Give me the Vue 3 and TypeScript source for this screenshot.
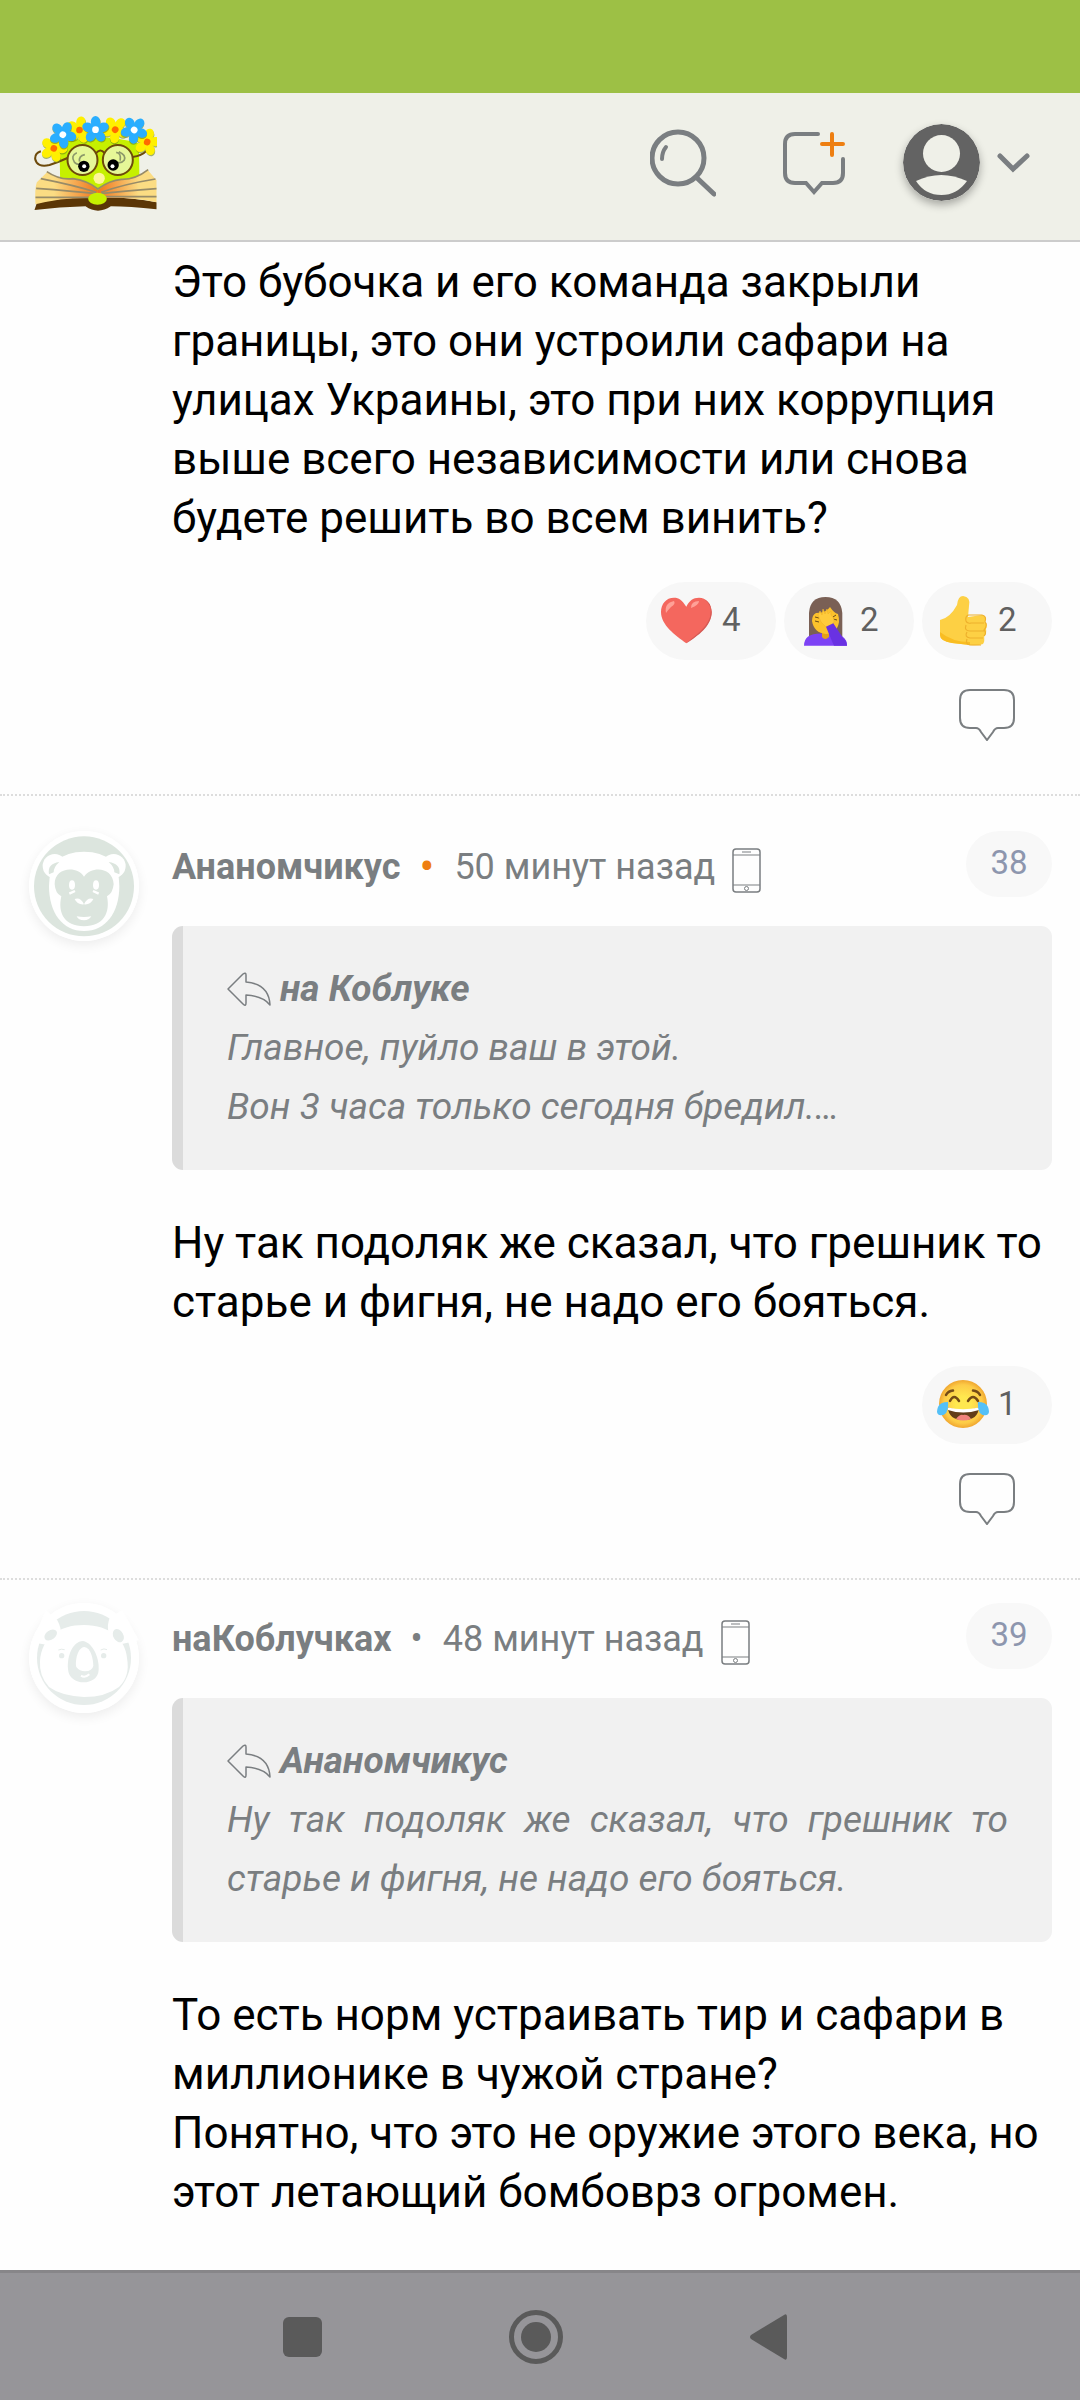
<script setup lang="ts">
interface Reaction {
  kind: 'heart' | 'facepalm' | 'thumb' | 'joy'
  label: string
  count: number
}

interface Comment {
  id: number
  author?: string
  avatar?: 'monkey' | 'koala'
  time?: string
  fresh?: boolean
  quote?: { author: string; lines: string[] }
  text: string[]
  reactions: Reaction[]
}

interface Flower {
  x: number
  y: number
  turn: number
  petal: string
  heart: string
}

const petalAngles = [0, 72, 144, 216, 288]

const wreath: Flower[] = [
  { x: 163, y: 200, turn: 20, petal: '#fff000', heart: '#ff6b00' },
  { x: 240, y: 145, turn: 10, petal: '#fff000', heart: '#ff6b00' },
  { x: 347, y: 144, turn: 40, petal: '#fff000', heart: '#ff6b00' },
  { x: 443, y: 181, turn: 15, petal: '#fff000', heart: '#ff6b00' },
  { x: 190, y: 159, turn: 30, petal: '#2aaeff', heart: '#fff' },
  { x: 288, y: 144, turn: 0, petal: '#2aaeff', heart: '#fff' },
  { x: 404, y: 145, turn: 40, petal: '#2aaeff', heart: '#fff' },
]

const comments: Comment[] = [
  {
    id: 37,
    text: [
      'Это бубочка и его команда закрыли границы, это они устроили сафари на улицах Украины, это при них коррупция выше всего независимости или снова будете решить во всем винить?',
    ],
    reactions: [
      { kind: 'heart', label: 'Сердце', count: 4 },
      { kind: 'facepalm', label: 'Рука на лице', count: 2 },
      { kind: 'thumb', label: 'Нравится', count: 2 },
    ],
  },
  {
    id: 38,
    author: 'Ананомчикус',
    avatar: 'monkey',
    time: '50 минут назад',
    fresh: true,
    quote: {
      author: 'на Коблуке',
      lines: ['Главное, пуйло ваш в этой.', 'Вон 3 часа только сегодня бредил.…'],
    },
    text: ['Ну так подоляк же сказал, что грешник то старье и фигня, не надо его бояться.'],
    reactions: [{ kind: 'joy', label: 'Смех до слёз', count: 1 }],
  },
  {
    id: 39,
    author: 'наКоблучках',
    avatar: 'koala',
    time: '48 минут назад',
    quote: {
      author: 'Ананомчикус',
      lines: ['Ну так подоляк же сказал, что грешник то старье и фигня, не надо его бояться.'],
    },
    text: [
      'То есть норм устраивать тир и сафари в миллионике в чужой стране?',
      'Понятно, что это не оружие этого века, но этот летающий бомбоврз огромен.',
    ],
    reactions: [],
  },
]
</script>

<template>
  <div class="page">
    <div class="status-bar"></div>

    <header class="top-bar">
      <a class="logo" href="#" aria-label="На главную">
        <svg viewBox="104 100 368 288" width="123" height="96">
          <defs>
            <linearGradient id="leafL" x1="0" x2="1"><stop offset="0.3" stop-color="#fbdc83" /><stop offset="1" stop-color="#f0741c" /></linearGradient>
            <linearGradient id="leafR" x1="1" x2="0"><stop offset="0.3" stop-color="#fbdc83" /><stop offset="1" stop-color="#f0741c" /></linearGradient>
          </defs>
          <path d="M180 185Q300 150 418 185L420 300L300 340L182 300Z" fill="#c6f000" />
          <path d="M105 385L112 364Q200 345 295 348Q390 345 471 362V383Q390 374 334 374Q295 400 258 374Q180 376 105 385Z" fill="#5b3606" />
          <path d="M144 270Q180 298 220 292Q262 296 295 326V350Q200 344 108 368Q105 320 112 302Z" fill="url(#leafL)" />
          <path d="M444 264Q408 296 366 294Q326 298 295 326V350Q390 344 471 362V296Z" fill="url(#leafR)" />
          <path d="M142 270Q180 296 220 291Q262 296 295 322Q330 296 366 293Q408 294 446 264M124 291Q230 312 290 332M110 320Q220 328 290 336M108 347H275M468 292Q370 308 305 332M471 321Q370 328 305 336M471 345H318" fill="none" stroke="#978b68" stroke-width="5" />
          <ellipse cx="294" cy="351" rx="28" ry="18" fill="#c6f000" />
          <circle cx="299" cy="290" r="17" fill="#fff59a" />
          <g fill="#e6f797" stroke="#6d4a0b" stroke-width="6">
            <circle cx="249" cy="235" r="45" /><circle cx="355" cy="235" r="45" />
          </g>
          <path d="M289 215Q302 198 315 214M204 229Q180 240 150 250Q112 258 107 232Q106 214 124 209M399 226Q428 222 442 206" fill="none" stroke="#6d4a0b" stroke-width="6" />
          <path d="M232 213Q212 222 225 242Q235 252 246 246M256 219Q237 223 240 240M350 212Q366 214 362 237M358 210Q381 220 374 236Q366 246 353 242" fill="none" stroke="#8c986a" stroke-width="5" />
          <circle cx="253" cy="254" r="17" /><circle cx="341" cy="250" r="17" />
          <circle cx="254" cy="254" r="6" fill="#fff" /><circle cx="339" cy="254" r="6" fill="#fff" />
          <g v-for="(f, i) in wreath" :key="i" :transform="`translate(${f.x} ${f.y}) rotate(${f.turn})`">
            <g fill="#6f8a1c" opacity="0.6" transform="translate(2 3)">
              <ellipse v-for="a in petalAngles" :key="a" cx="0" cy="-24" rx="14" ry="17" :transform="`rotate(${a})`" />
            </g>
            <g :fill="f.petal">
              <ellipse v-for="a in petalAngles" :key="a" cx="0" cy="-24" rx="14" ry="17" :transform="`rotate(${a})`" />
              <circle r="16" />
            </g>
            <circle r="10" :fill="f.heart" />
          </g>
        </svg>
      </a>

      <nav class="tools">
        <button class="tool" type="button" aria-label="Поиск">
          <svg viewBox="0 0 66 80" width="66" height="80" fill="none" stroke="#7a7e81" stroke-linecap="round">
            <circle cx="28" cy="35" r="26" stroke-width="5" />
            <path d="M46 54L64 71" stroke-width="5" /><path d="M12 36Q12 29 16 24" stroke-width="4" />
          </svg>
        </button>
        <button class="tool" type="button" aria-label="Новая тема">
          <svg viewBox="0 0 62 80" width="62" height="80" fill="none" stroke-width="4" stroke-linecap="round">
            <path d="M35 11H12Q2 11 2 21V50Q2 60 12 60H23L31 69L39 60H50Q60 60 60 50V36" stroke="#7a7e81" />
            <path d="M49 11V32M39 21H60" stroke="#ee7f11" />
          </svg>
        </button>
        <button class="tool account" type="button" aria-label="Профиль">
          <svg class="person" viewBox="0 0 77 77" width="77" height="77">
            <circle cx="38.500" cy="38.500" r="38.500" fill="#636363" />
            <circle cx="38.500" cy="29.500" r="18.500" fill="#eff0e8" />
            <path d="M13 57Q38 45 64 57Q54 71 38.500 71Q22 71 13 57Z" fill="#eff0e8" />
          </svg>
          <svg viewBox="0 0 33 20" width="33" height="20" fill="none" stroke="#7a7e81" stroke-width="5" stroke-linecap="round">
            <path d="M3 3L16 16L30 3" />
          </svg>
        </button>
      </nav>
    </header>

    <main class="feed">
      <article v-for="c in comments" :key="c.id" class="comment" :class="{ headed: c.author, fresh: c.fresh }">
        <div class="side">
          <div v-if="c.avatar" class="avatar">
            <svg v-if="c.avatar === 'monkey'" viewBox="0 0 330 330" width="110" height="110">
              <circle cx="165" cy="165" r="165" fill="#fff" />
              <circle cx="165" cy="166" r="150" fill="#dce5de" />
              <g fill="#fff"><circle cx="77" cy="105" r="36" /><circle cx="254" cy="105" r="36" /><path d="M60 165Q60 62 165 62Q271 62 271 165C271 245 230 300 165 300C100 300 60 245 60 165Z" /></g>
              <path d="M60 130Q54 98 91 93Q74 108 74 124ZM271 130Q276 98 239 93Q256 108 256 124Z" fill="#dce5de" />
              <path d="M165 137C145 104 76 108 77 160Q79 188 97 196C86 245 105 285 165 286C225 285 244 245 234 196Q251 188 254 160C252 108 188 104 165 137Z" fill="#dce5de" />
              <g fill="#fff"><ellipse cx="129" cy="162" rx="9" ry="14" /><ellipse cx="201" cy="162" rx="9" ry="14" /></g>
              <path d="M121 188L138 180M209 188L192 180" stroke="#fff" stroke-width="7" />
              <path d="M137 204Q155 198 165 220Q145 222 137 204ZM193 204Q175 198 165 220Q185 222 193 204ZM143 256Q165 260 187 256Q180 268 165 268Q148 268 143 256Z" fill="#fff" />
            </svg>
            <svg v-else viewBox="0 0 330 330" width="110" height="110">
              <circle cx="165" cy="165" r="165" fill="#fff" />
              <circle cx="165" cy="165" r="141" fill="#e6ecea" />
              <path d="M50 20L85 52Q98 76 95 95Q75 105 56 126L10 118ZM280 20L242 45Q234 65 238 87Q258 105 275 124L330 112Z" fill="#fff" />
              <path d="M33 175C38 105 88 66 165 66C242 66 290 110 294 165Q304 220 270 252Q230 282 165 282Q95 278 60 252Q30 220 33 175Z" fill="#fff" />
              <g fill="#e6ecea"><ellipse cx="65" cy="96" rx="21" ry="14" transform="rotate(-35 65 96)" /><ellipse cx="268" cy="98" rx="21" ry="15" transform="rotate(60 268 98)" />
                <circle cx="98" cy="158" r="8" /><circle cx="224" cy="158" r="8" />
                <path d="M162 114C195 120 212 172 209 200C208 250 120 252 117 198C114 160 130 116 162 114Z" />
              </g>
              <path d="M166 132C142 134 138 185 142 192Q152 205 168 205Q190 204 193 188C192 168 186 134 166 132Z" fill="#fff" />
              <path d="M156 218Q168 226 181 214" fill="none" stroke="#fff" stroke-width="6" />
              <path d="M88 141Q97 137 107 140M215 141Q225 135 234 140" fill="none" stroke="#e6ecea" stroke-width="3" />
            </svg>
          </div>
        </div>

        <div class="body">
          <div v-if="c.author" class="meta">
            <div class="byline">
              <a class="author" href="#">{{ c.author }}</a>
              <span class="dot">•</span>
              <time>{{ c.time }}</time>
              <svg class="phone" viewBox="0 0 29 45" width="29" height="45" fill="none" stroke="#7a7e81">
                <rect x="1" y="1" width="27" height="43" rx="3" stroke-width="1.500" />
                <path d="M1 7H28M1 37H28" stroke-width="1" /><path d="M10 4H19" stroke-width="2" opacity="0.500" /><circle cx="14.500" cy="40.500" r="2" />
              </svg>
            </div>
            <a class="number" href="#">{{ c.id }}</a>
          </div>

          <blockquote v-if="c.quote" class="quote">
            <div class="quote-author">
              <svg viewBox="0 0 44 34" width="44" height="34" fill="none" stroke="#7a7e81" stroke-width="1.500" stroke-linejoin="round">
                <path d="M1 17L16 2Q19 0 19 3V10Q42 12 43 33Q36 24 19 23V31Q19 35 16 32Z" />
              </svg>
              <strong>{{ c.quote.author }}</strong>
            </div>
            <p v-for="line in c.quote.lines" :key="line">{{ line }}</p>
          </blockquote>

          <div class="text">
            <p v-for="line in c.text" :key="line">{{ line }}</p>
          </div>

          <template v-if="c.reactions.length">
            <div class="reactions">
              <button v-for="r in c.reactions" :key="r.kind" class="reaction" type="button" :aria-label="r.label">
                <svg v-if="r.kind === 'heart'" viewBox="0 0 54 52" width="54" height="52">
                  <path d="M26.300 11.700C22 5 19 2.700 14 2.700C6 2.700 1 9 1 17C1 30 15 40 26.300 48.300C38 40 51.700 30 51.700 17C51.700 9 46 2.700 39 2.700C33 2.700 29 6 26.300 11.700Z" fill="#f4675e" />
                  <path d="M44 4Q53 10 50 22C46 34 34 41 26.300 48.300C38 41 51.700 31 51.700 17Q51 7 44 4Z" fill="#d45a55" />
                  <path d="M6 18Q4 8 14 6Q16 9 11 12Q8 15 6 18ZM31 13Q31 6 39 6Q39 10 31 13Z" fill="#ffa197" />
                </svg>
                <svg v-else-if="r.kind === 'facepalm'" viewBox="0 0 54 52" width="54" height="52">
                  <path d="M11 42V18Q12 2 27.500 2Q43 2 44.300 18V42Z" fill="#7a6055" />
                  <path d="M6 50.700Q6 38 24 38.500L32 38Q49 39 49 50.700Z" fill="#7d42f5" />
                  <path d="M24 36H31V42Q27 46 24 42Z" fill="#e5a017" />
                  <path d="M14 26Q14 20 18 18Q28 18 32 12Q36 18 40 19Q41 22 41 27Q39 39 28 39Q16 38 14 26Z" fill="#fcc22c" />
                  <path d="M17 22L21 23M17 26L21 27M38 20L35 22M39 25L35 24" stroke="#6a4b18" />
                  <path d="M22 16L24 20L25 14L27 19L29 14L30 19L33 16L33 20Q38 25 35 29L28 32Q22 28 20 20Z" fill="#ffcb3c" stroke="#f0b42a" stroke-width="0.600" />
                  <path d="M28 31.700L35.300 28.300L45 43Q49 46 49 50.700H36Q33 44 28 31.700Z" fill="#6932e2" />
                </svg>
                <svg v-else-if="r.kind === 'thumb'" viewBox="0 0 54 52" width="54" height="52">
                  <path d="M4 25Q14 23 21 10Q22 1 27 1Q35 2 33 11L32 22L46 20Q51 21 49 27Q52 30 50 34Q51 38 48 41Q49 46 47 49Q42 51 34 50L16 48Q4 46 4 40Z" fill="#fdd044" />
                  <path d="M4 37Q16 47 34 47V50L16 48Q4 46 4 40Z" fill="#f9bd22" />
                  <path d="M32 20Q29 22 30 26Q31 29 35 28H48M30 30Q28 36 34 36H48M31 37Q28 42 34 43H47M31 44Q29 49 34 50H45M49 27Q52 30 48 35Q51 38 48 41M46 20Q51 21 49 27M32 20H46" fill="none" stroke="#eeb02c" stroke-width="1.200" />
                </svg>
                <svg v-else viewBox="0 0 54 52" width="54" height="52">
                  <defs><radialGradient id="joyFace"><stop offset="0.300" stop-color="#ffe84f" /><stop offset="0.800" stop-color="#fdcb47" /><stop offset="1" stop-color="#f0a730" /></radialGradient></defs>
                  <circle cx="27" cy="25" r="24" fill="url(#joyFace)" />
                  <path d="M10 16Q12 12 17 11.500M44 16Q42 12 37 11.500M14 22Q18 14 23 22M32 22Q37 14 42 22" fill="none" stroke="#744b16" stroke-width="2.500" stroke-linecap="round" />
                  <path d="M11.700 28.500Q27 34 43 28.500Q42 41 27.300 41Q13 41 11.700 28.500Z" fill="#623e19" />
                  <path d="M11.700 28.500Q27 32 43 28.500V31Q27 36 12 31Z" fill="#fff" />
                  <path d="M20 40Q24 35 27 36Q32 35 35 40Q27 43 20 40Z" fill="#f0837c" />
                  <path d="M12 23Q13 36 5 36.300Q-1 36 2 28Q4 23 12 23ZM42 23Q41 36 49 36.300Q55 36 52 28Q50 23 42 23Z" fill="#54c0f7" />
                </svg>
                <span class="count">{{ r.count }}</span>
              </button>
            </div>
            <div class="actions">
              <button class="reply" type="button" aria-label="Ответить">
                <svg viewBox="0 0 56 52" width="56" height="52" fill="none" stroke="#7a7e81" stroke-width="2">
                  <path d="M11 1H45Q55 1 55 11V29Q55 39 45 39H39Q36 39 34 43L28 51L22 43Q20 39 17 39H11Q1 39 1 29V11Q1 1 11 1Z" />
                </svg>
              </button>
            </div>
          </template>
        </div>
      </article>
    </main>

    <footer class="system-nav">
      <button type="button" aria-label="Недавние">
        <svg viewBox="0 0 54 54" width="54" height="54" fill="#5a5a5a"><rect x="7" y="7" width="39" height="40" rx="6" /></svg>
      </button>
      <button type="button" aria-label="Домой">
        <svg viewBox="0 0 54 54" width="54" height="54" fill="#5a5a5a"><circle cx="27" cy="27" r="24.500" fill="none" stroke="#5a5a5a" stroke-width="5" /><circle cx="27" cy="27" r="15" /></svg>
      </button>
      <button type="button" aria-label="Назад">
        <svg viewBox="0 0 54 54" width="54" height="54" fill="#5a5a5a"><path d="M9 25L42 5Q45 3 45 7V47Q45 51 42 49L9 29Q7 27 9 25Z" /></svg>
      </button>
    </footer>
  </div>
</template>

<style>
body {
  margin: 0;
  background: #fefefe;
}
</style>

<style scoped>
.page {
  display: flex;
  flex-direction: column;
  min-height: 100vh;
  background: #fefefe;
  color: #000;
  font-family: Roboto, "Noto Sans", sans-serif;
  font-size: 44px;
  line-height: 59px;
}
svg {
  display: block;
  flex: none;
}
p {
  margin: 0;
}
a {
  color: inherit;
  text-decoration: none;
}
button {
  padding: 0;
  border: 0;
  background: none;
  font: inherit;
  color: inherit;
}
.status-bar {
  height: 93px;
  background: #9dc045;
}
.top-bar {
  display: flex;
  align-items: center;
  justify-content: space-between;
  box-sizing: border-box;
  height: 149px;
  padding: 0 50px 8px 34px;
  border-bottom: 2px solid #ccc;
  background: #eff0e8;
}
.tools {
  display: flex;
  align-items: center;
}
.tool {
  margin-left: 67px;
}
.account {
  display: flex;
  align-items: center;
  gap: 17px;
  margin-left: 58px;
}
.person {
  border-radius: 50%;
  box-shadow: 0 4px 8px rgba(0, 0, 0, 0.3);
}
.feed {
  flex: 1;
}
.comment {
  display: flex;
  gap: 33px;
  padding: 11px 28px 53px 29px;
}
.comment + .comment {
  border-top: 2px dotted #ddd;
}
.comment.headed {
  padding-top: 23px;
}
.comment.fresh {
  padding-top: 35px;
}
.comment:last-child {
  padding-bottom: 34px;
}
.side {
  flex: none;
  width: 110px;
}
.avatar {
  border-radius: 50%;
  box-shadow: 0 4px 12px rgba(0, 0, 0, 0.07);
}
.body {
  flex: 1;
  min-width: 0;
}
.meta {
  display: flex;
  justify-content: space-between;
  margin-bottom: 29px;
  color: #7a7e81;
  font-size: 36px;
}
.byline {
  display: flex;
  align-items: center;
  padding-top: 7px;
}
.author {
  font-weight: 700;
}
.dot {
  margin: 0 20px 0 19px;
}
.fresh .dot {
  color: #ee7f11;
  font-size: 44px;
}
.phone {
  margin: 5px 0 0 17px;
}
.number {
  box-sizing: border-box;
  width: 86px;
  height: 66px;
  border-radius: 33px;
  background: #f8f8f8;
  color: #8d96ae;
  font-size: 33px;
  line-height: 64px;
  text-align: center;
}
.quote {
  margin: 0 0 44px;
  padding: 33px 44px 34px;
  border-left: 11px solid #dbdbdb;
  border-radius: 11px;
  background: #f1f1f1;
  color: #7a7e81;
  font-size: 37px;
  font-style: italic;
  text-align: justify;
}
.quote-author {
  display: flex;
  align-items: center;
  gap: 9px;
}
.reactions {
  display: flex;
  justify-content: flex-end;
  gap: 8px;
  margin-top: 34px;
}
.reaction {
  display: flex;
  align-items: center;
  gap: 8px;
  box-sizing: border-box;
  min-width: 130px;
  height: 78px;
  padding: 0 20px 0 14px;
  border-radius: 39px;
  background: #f7f7f7;
  color: #606060;
  font-size: 33px;
}
.count {
  padding-bottom: 3px;
}
.actions {
  display: flex;
  justify-content: flex-end;
  margin-top: 29px;
  padding-right: 37px;
}
.system-nav {
  position: sticky;
  bottom: 0;
  display: flex;
  align-items: center;
  justify-content: center;
  gap: 179px;
  box-sizing: border-box;
  height: 130px;
  padding-right: 8px;
  border-top: 3px solid #878689;
  background: #969599;
}
</style>
